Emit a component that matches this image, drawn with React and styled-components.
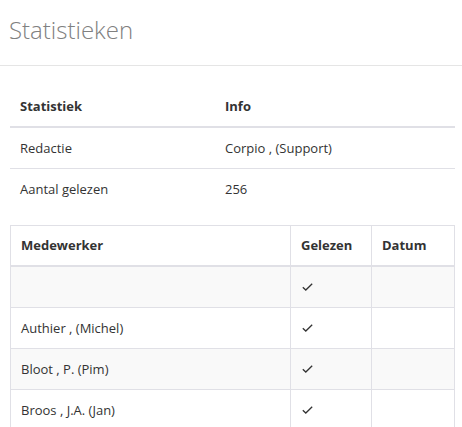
import React from "react";
import styled, { createGlobalStyle } from "styled-components";

const GlobalStyle = createGlobalStyle`
  body {
    margin: 0;
    background: #fff;
    font-family: "Open Sans", "Liberation Sans", sans-serif;
    font-size: 13px;
    color: #333;
  }
`;

const Page = styled.div`
  width: 462px;
`;

const Header = styled.div`
  padding: 13px 9px 0;
  height: 52px;
  border-bottom: 1px solid #e5e5e5;
`;

const Title = styled.h1`
  margin: 0;
  font-size: 24px;
  font-weight: 300;
  line-height: 33px;
  color: #808080;
`;

const Body = styled.div`
  padding: 21px 7px 0 10px;
  display: flex;
  flex-direction: column;
  gap: 16px;
`;

const Table = styled.table`
  width: ${(p) => p.width}px;
  border-collapse: collapse;
  table-layout: fixed;
  ${(p) => p.bordered && "border: 1px solid #e0e0e6;"}
`;

const Th = styled.th`
  text-align: left;
  font-weight: 700;
  padding: 10px 10px;
  line-height: 19px;
  border-bottom: 2px solid #e0e0e6;
  ${(p) => p.bordered && "border-left: 1px solid #e0e0e6;"}
`;

const Td = styled.td`
  padding: 10px 10px;
  line-height: 20px;
  height: 20px;
  ${(p) => p.bordered && "border-left: 1px solid #e0e0e6;"}
`;

const Tbody = styled.tbody`
  tr + tr td {
    border-top: 1px solid #e0e0e6;
  }
`;

const Row = styled.tr`
  background: ${(p) => (p.striped ? "#f9f9f9" : "#fff")};
`;

const Check = () => (
  <svg width="11" height="8" viewBox="0 0 11 8" style={{ display: "block", marginLeft: 1 }}>
    <path d="M0.8 4.2 L3.8 7 L10.2 0.8" fill="none" stroke="#333" strokeWidth="1.3" />
  </svg>
);

const stats = [
  ["Redactie", "Corpio , (Support)"],
  ["Aantal gelezen", "256"],
];

const readers = ["", "Authier , (Michel)", "Bloot , P. (Pim)", "Broos , J.A. (Jan)"];

export default function App() {
  return (
    <Page>
      <GlobalStyle />
      <Header>
        <Title>Statistieken</Title>
      </Header>
      <Body>
        <Table width={445}>
          <colgroup>
            <col style={{ width: 205 }} />
            <col />
          </colgroup>
          <thead>
            <tr>
              <Th>Statistiek</Th>
              <Th>Info</Th>
            </tr>
          </thead>
          <Tbody>
            {stats.map(([k, v]) => (
              <Row key={k}>
                <Td>{k}</Td>
                <Td>{v}</Td>
              </Row>
            ))}
          </Tbody>
        </Table>
        <Table width={445} bordered>
          <colgroup>
            <col style={{ width: 280 }} />
            <col style={{ width: 81 }} />
            <col />
          </colgroup>
          <thead>
            <tr>
              <Th>Medewerker</Th>
              <Th bordered>Gelezen</Th>
              <Th bordered>Datum</Th>
            </tr>
          </thead>
          <Tbody>
            {readers.map((name, i) => (
              <Row key={i} striped={i % 2 === 0}>
                <Td>{name}</Td>
                <Td bordered>
                  <Check />
                </Td>
                <Td bordered />
              </Row>
            ))}
          </Tbody>
        </Table>
      </Body>
    </Page>
  );
}
